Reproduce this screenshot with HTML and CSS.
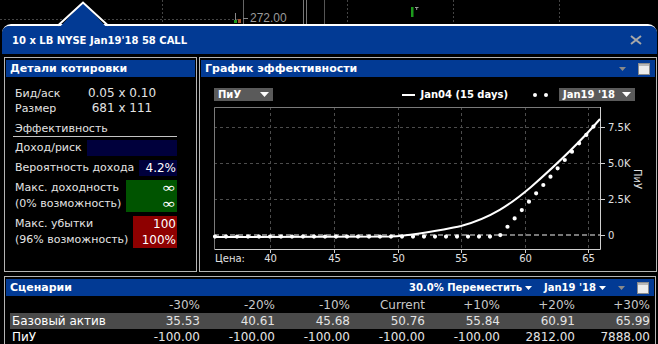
FILE: index.html
```html
<!DOCTYPE html>
<html lang="ru">
<head>
    <meta charset="UTF-8">
    <title>10 x LB NYSE Jan19'18 58 CALL</title>
    <link rel="stylesheet" href="styles.css">
</head>
<body>
    <svg class="backdrop" width="658" height="24">
        <line x1="0" y1="19.5" x2="240" y2="19.5" class="dash"/>
        <line x1="162.5" y1="0" x2="162.5" y2="24" class="dash"/>
        <line x1="347.5" y1="0" x2="347.5" y2="24" class="dash"/>
        <line x1="453.5" y1="0" x2="453.5" y2="24" class="dash"/>
        <line x1="559.5" y1="0" x2="559.5" y2="24" class="dash"/>
        <line x1="243.5" y1="0" x2="243.5" y2="24" stroke="#666"/>
        <line x1="303.5" y1="0" x2="303.5" y2="24" stroke="#777"/>
        <line x1="306.5" y1="0" x2="306.5" y2="24" stroke="#777"/>
        <line x1="324.5" y1="0" x2="324.5" y2="24" stroke="#555"/>
        <line x1="235.5" y1="13" x2="235.5" y2="21" stroke="#888"/>
        <rect x="234" y="20" width="3" height="3" fill="#1c9a1c"/>
        <rect x="238" y="19" width="3" height="4" fill="#a0522d"/>
        <line x1="243" y1="18.5" x2="248" y2="18.5" stroke="#888"/>
        <text x="250" y="22" class="last-price">272.00</text>
        <rect x="411" y="7" width="2.5" height="10" fill="#1c9a1c"/>
        <path d="M415 7.5 H418.5 M416.7 7.5 V10" stroke="#999"/>
    </svg>

    <div class="window">
        <svg class="notch" width="52" height="28">
            <polygon points="1,28 26,1 51,28" fill="#023a94"/>
            <polyline points="1,24.5 26,1.5 51,24.5" fill="none" stroke="#fff" stroke-width="2"/>
        </svg>
        <div class="window-head">
            <span class="window-title">10 x LB NYSE Jan19'18 58 CALL</span>
            <svg class="close" width="12" height="10">
                <path d="M1 1 L11 9 M11 1 L1 9" stroke="#a8a8a8" stroke-width="2"/>
            </svg>
        </div>

        <div class="panes">
            <section class="panel">
                <div class="panel-head">Детали котировки</div>
                <div class="quote-body">
                    <div class="kv"><span class="kv-label">Бид/аск</span><span class="kv-val">0.05 x 0.10</span></div>
                    <div class="kv"><span class="kv-label">Размер</span><span class="kv-val">681 x 111</span></div>
                    <div class="section-title">Эффективность</div>
                    <div class="metric">
                        <span class="metric-label">Доход/риск</span>
                        <span class="metric-box navy"></span>
                    </div>
                    <div class="metric">
                        <span class="metric-label">Вероятность дохода</span>
                        <span class="metric-box navy">4.2%</span>
                    </div>
                    <div class="metric">
                        <span class="metric-label">Макс. доходность<br>(0% возможность)</span>
                        <span class="metric-box green"><span class="inf">∞</span><br><span class="inf">∞</span></span>
                    </div>
                    <div class="metric">
                        <span class="metric-label">Макс. убытки<br>(96% возможность)</span>
                        <span class="metric-box red">100<br>100%</span>
                    </div>
                </div>
            </section>

            <section class="panel">
                <div class="panel-head">
                    <span>График эффективности</span>
                    <div class="head-tools">
                        <svg width="7" height="4"><polygon points="0,0 7,0 3.5,4" fill="#8a8a8a"/></svg>
                        <svg width="12" height="12">
                            <rect x="0.5" y="0.5" width="11" height="11" fill="#ececec" stroke="#8c8c8c"/>
                            <rect x="1" y="1" width="10" height="2" fill="#b8b8b8"/>
                        </svg>
                    </div>
                </div>
                <div class="chart-tools">
                    <div class="select select-short">ПиУ<svg width="9" height="5"><polygon points="0,0 9,0 4.5,5" fill="#fff"/></svg></div>
                    <span class="legend-line"></span>
                    <span class="legend-text">Jan04 (15 days)</span>
                    <span class="legend-dots"><i></i><i></i></span>
                    <div class="select select-long">Jan19 '18<svg width="9" height="5"><polygon points="0,0 9,0 4.5,5" fill="#fff"/></svg></div>
                </div>
                <svg class="chart" width="453" height="170">
                    <g class="grid">
                        <line x1="69.5" y1="6" x2="69.5" y2="148"/>
                        <line x1="133.5" y1="6" x2="133.5" y2="148"/>
                        <line x1="197.5" y1="6" x2="197.5" y2="148"/>
                        <line x1="260.5" y1="6" x2="260.5" y2="148"/>
                        <line x1="324.5" y1="6" x2="324.5" y2="148"/>
                        <line x1="387.5" y1="6" x2="387.5" y2="148"/>
                        <line x1="13" y1="26.5" x2="399" y2="26.5"/>
                        <line x1="13" y1="62.5" x2="399" y2="62.5"/>
                        <line x1="13" y1="98.5" x2="399" y2="98.5"/>
                    </g>
                    <line x1="13" y1="134" x2="399" y2="134" class="zero"/>
                    <path d="M13.5 148 V6.5 H399" class="frame-dim"/>
                    <path d="M13.5 148.5 H399.5 V6" class="frame"/>
                    <g class="ticks">
                        <line x1="399" y1="26.5" x2="404" y2="26.5"/>
                        <line x1="399" y1="62.5" x2="404" y2="62.5"/>
                        <line x1="399" y1="98.5" x2="404" y2="98.5"/>
                        <line x1="399" y1="134.5" x2="404" y2="134.5"/>
                        <line x1="69.5" y1="148" x2="69.5" y2="152"/>
                        <line x1="133.5" y1="148" x2="133.5" y2="152"/>
                        <line x1="197.5" y1="148" x2="197.5" y2="152"/>
                        <line x1="260.5" y1="148" x2="260.5" y2="152"/>
                        <line x1="324.5" y1="148" x2="324.5" y2="152"/>
                        <line x1="387.5" y1="148" x2="387.5" y2="152"/>
                    </g>
                    <path d="M14 135.6 L298 135.6 L396 21.5" class="expiry"/>
                    <path d="M13 136 L190 135.5 C215 134.5 235 130 260 125 C290 117 310 103 330 86 C355 64 380 40 399 18" class="today"/>
                    <g class="axis-text">
                        <text x="407" y="30">7.5K</text>
                        <text x="407" y="66">5.0K</text>
                        <text x="407" y="102">2.5K</text>
                        <text x="407" y="138">0</text>
                        <text x="14" y="161">Цена:</text>
                        <text x="69.5" y="161" text-anchor="middle">40</text>
                        <text x="133.5" y="161" text-anchor="middle">45</text>
                        <text x="197.5" y="161" text-anchor="middle">50</text>
                        <text x="260.5" y="161" text-anchor="middle">55</text>
                        <text x="324.5" y="161" text-anchor="middle">60</text>
                        <text x="387.5" y="161" text-anchor="middle">65</text>
                        <text x="436" y="78" text-anchor="middle" dominant-baseline="central" transform="rotate(90 436 78)">ПиУ</text>
                    </g>
                </svg>
            </section>
        </div>

        <section class="panel scenarios">
            <div class="panel-head">
                <span>Сценарии</span>
                <div class="head-tools">
                    <span class="head-menu">30.0% Переместить<svg width="7" height="4"><polygon points="0,0 7,0 3.5,4" fill="#fff"/></svg></span>
                    <span class="head-menu">Jan19 '18<svg width="7" height="4"><polygon points="0,0 7,0 3.5,4" fill="#fff"/></svg></span>
                    <svg width="7" height="4"><polygon points="0,0 7,0 3.5,4" fill="#8a8a8a"/></svg>
                    <svg width="12" height="12">
                        <rect x="0.5" y="0.5" width="11" height="11" fill="#ececec" stroke="#8c8c8c"/>
                        <rect x="1" y="1" width="10" height="2" fill="#b8b8b8"/>
                    </svg>
                </div>
            </div>
            <div class="scen-table">
                <div class="scen-row scen-headrow">
                    <span></span><span>-30%</span><span>-20%</span><span>-10%</span><span>Current</span><span>+10%</span><span>+20%</span><span>+30%</span>
                </div>
                <div class="scen-row shaded">
                    <span>Базовый актив</span><span>35.53</span><span>40.61</span><span>45.68</span><span>50.76</span><span>55.84</span><span>60.91</span><span>65.99</span>
                </div>
                <div class="scen-row">
                    <span>ПиУ</span><span>-100.00</span><span>-100.00</span><span>-100.00</span><span>-100.00</span><span>-100.00</span><span>2812.00</span><span>7888.00</span>
                </div>
            </div>
        </section>
    </div>
</body>
</html>
```

FILE: styles.css
```css
body {
    margin: 0;
    width: 658px;
    height: 344px;
    overflow: hidden;
    background-color: #000;
    font-family: "DejaVu Sans", Verdana, sans-serif;
    font-size: 11px;
    color: #e4e4e4;
}
.backdrop {
    display: block;
}
.backdrop .dash {
    stroke: #444;
    stroke-dasharray: 2 2;
}
.last-price {
    font-family: "Liberation Sans", Arial, sans-serif;
    font-size: 12px;
    fill: #9a9a9a;
}

/* window */
.window {
    position: relative;
    margin: 0 1px 0 2px;
    border-top: 2px solid #fff;
    border-radius: 9px 9px 0 0;
    background-color: #000;
}
.notch {
    position: absolute;
    left: 55px;
    top: -25px;
}
.window-head {
    display: flex;
    justify-content: space-between;
    align-items: center;
    height: 28px;
    padding: 0 15px 0 10px;
    background-color: #023a94;
    border-radius: 7px 7px 0 0;
}
.window-title {
    color: #fff;
    font-weight: bold;
    font-size: 10px;
}
.close {
    display: block;
}

.panes {
    display: grid;
    grid-template-columns: 193px 1fr;
    gap: 2px;
    height: 215px;
    padding: 3px 0 0 2px;
}
.panel {
    border: 1px solid #b4b4b4;
    padding: 1px;
    overflow: hidden;
}
.panel-head {
    display: flex;
    justify-content: space-between;
    align-items: center;
    height: 17px;
    margin-top: 1px;
    padding: 0 5px 0 4px;
    background-color: #023a94;
    color: #fff;
    font-weight: bold;
}
.head-tools {
    display: flex;
    align-items: center;
    gap: 12px;
}
.head-tools svg {
    display: block;
}
.head-menu {
    display: flex;
    align-items: center;
    gap: 3px;
    font-size: 10px;
}

/* quote details */
.quote-body {
    padding: 9px 18px 0 9px;
}
.kv {
    display: flex;
    line-height: 15px;
}
.kv-label {
    width: 64px;
}
.kv-val {
    width: 86px;
    text-align: center;
    font-size: 12px;
}
.section-title {
    margin: 5px 0 0 -2px;
    padding-left: 2px;
    line-height: 15px;
    border-bottom: 1px solid #c4c4c4;
}
.metric {
    display: flex;
    gap: 5px;
    margin-top: 4px;
    line-height: 16px;
}
.section-title + .metric {
    margin-top: 3px;
}
.metric-label {
    white-space: nowrap;
}
.metric-box {
    flex: 1;
    text-align: right;
    padding-right: 1px;
    color: #fff;
    font-size: 12px;
}
.inf {
    display: inline-block;
    transform: scale(1.45, 1.1);
    transform-origin: right center;
}
.navy {
    background-color: #00003c;
}
.green {
    background-color: #005400;
}
.red {
    background-color: #8e0000;
}

/* chart */
.chart-tools {
    display: flex;
    align-items: center;
    height: 13px;
    padding: 11px 20px 0 13px;
}
.select {
    display: flex;
    justify-content: space-between;
    align-items: center;
    height: 13px;
    padding: 0 4px 0 4px;
    box-sizing: border-box;
    background-color: #5a5a5a;
    color: #fff;
    font-weight: bold;
    font-size: 10px;
}
.select-short {
    width: 59px;
}
.select-long {
    width: 76px;
    margin-left: 11px;
}
.legend-line {
    width: 13px;
    height: 2px;
    margin-left: auto;
    background-color: #fff;
}
.legend-text {
    margin-left: 5px;
    color: #fff;
    font-weight: bold;
    font-size: 10px;
}
.legend-dots {
    display: flex;
    gap: 7px;
    margin-left: 25px;
}
.legend-dots i {
    width: 4px;
    height: 4px;
    border-radius: 50%;
    background-color: #fff;
}
.chart {
    display: block;
}
.grid line {
    stroke: #4c4c4c;
    stroke-dasharray: 3 3;
}
.zero {
    stroke: #a0a0a0;
    stroke-dasharray: 5 3;
    stroke-width: 1.5;
}
.frame-dim {
    fill: none;
    stroke: #7a7a7a;
}
.frame {
    fill: none;
    stroke: #d0d0d0;
}
.ticks line {
    stroke: #d0d0d0;
}
.expiry {
    fill: none;
    stroke: #fff;
    stroke-width: 4.2;
    stroke-linecap: round;
    stroke-dasharray: 0 11;
}
.today {
    fill: none;
    stroke: #fff;
    stroke-width: 2;
}
.axis-text text {
    fill: #e0e0e0;
    font-size: 10px;
}

/* scenarios */
.scenarios {
    margin: 4px 1px 0 2px;
    height: 80px;
}
.scen-table {
    margin: 1px 0 0 4px;
    font-size: 12px;
}
.scen-row {
    display: grid;
    grid-template-columns: 115px repeat(7, 75px);
    line-height: 16px;
    width: 640px;
}
.scen-row span {
    text-align: right;
}
.scen-row span:first-child {
    text-align: left;
    padding-left: 2px;
    color: #fff;
}
.scen-headrow {
    color: #c8c8c8;
}
.shaded {
    background-color: #4a4a4a;
}
```
